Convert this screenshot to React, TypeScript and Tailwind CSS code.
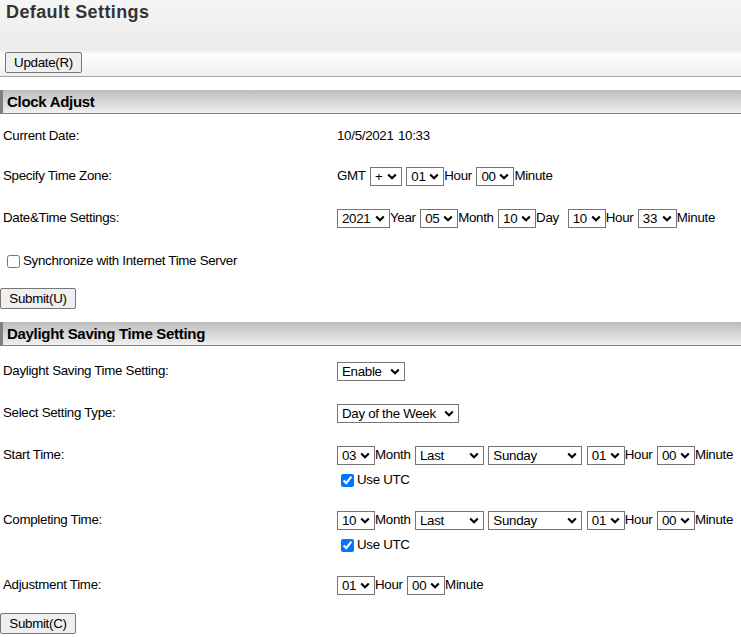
import React from "react";

const font = "font-['Liberation_Sans',Arial,sans-serif]";
const btn =
  "h-[21px] border border-[#767676] bg-[#efefef] rounded-[2px] text-[13.33px] tracking-[-0.3px] text-black text-center";

function Chevron() {
  return (
    <svg
      className="pointer-events-none absolute right-[5px] top-[6px]"
      width="10"
      height="7"
      viewBox="0 0 10 7"
    >
      <path d="M1.2 1.5 L5 5.2 L8.8 1.5" fill="none" stroke="#000" strokeWidth="2.1" />
    </svg>
  );
}

function Sel({ w, value, options }: { w: string; value: string; options?: string[] }) {
  const opts = options ?? [value];
  return (
    <span className={`relative inline-block h-[19px] align-middle ${w}`}>
      <select
        className="block h-[19px] w-full appearance-none rounded-none border border-[#767676] bg-white pl-[4px] text-[13.33px] leading-[17px] tracking-[-0.3px] text-black"
        defaultValue={value}
      >
        {opts.map((o) => (
          <option key={o}>{o}</option>
        ))}
      </select>
      <Chevron />
    </span>
  );
}

function SectionHeader({ title }: { title: string }) {
  return (
    <div className="h-[24px] border-l-[3px] border-b border-[#808080] bg-[linear-gradient(to_bottom,#bcbcbc,#f0f0f0)] pl-[4px] text-[15px] font-bold leading-[23px] text-black">
      {title}
    </div>
  );
}

function Row({ label, mt, children }: { label: string; mt: string; children: React.ReactNode }) {
  return (
    <div className={`grid grid-cols-[334px_1fr] pl-[3px] ${mt}`}>
      <div className="h-[20px] leading-[20px]">{label}</div>
      <div className="whitespace-nowrap leading-[20px] [word-spacing:1px]">{children}</div>
    </div>
  );
}

function UseUtc() {
  return (
    <div className="mt-[5px] flex h-[20px] items-center [word-spacing:0px]">
      <input type="checkbox" defaultChecked className="ml-[4px] mr-[3px] h-[13px] w-[13px]" />
      <span>Use UTC</span>
    </div>
  );
}

const hours = ["00", "01", "02", "03", "04", "05", "06", "07", "08", "09", "10", "11", "12"];

export default function App() {
  return (
    <div className={`${font} w-[741px] min-h-[637px] bg-white text-[13.33px] tracking-[-0.3px] text-black`}>
      {/* page header */}
      <div className="h-[77px] border-b border-[#a5a5a5] bg-[linear-gradient(to_bottom,#f5f5f5_0px,#ebebeb_50px,#fdfdfd_54px,#f0f0f0_76px)]">
        <h1 className="pl-[6px] pt-[1px] text-[18px] font-bold leading-[22px] tracking-[0.4px] text-[#333]">
          Default Settings
        </h1>
        <div className="mt-[29px] pl-[5px]">
          <button className={`${btn} w-[77px]`}>Update(R)</button>
        </div>
      </div>

      <div className="mt-[13px]">
        <SectionHeader title="Clock Adjust" />
      </div>

      <Row label="Current Date:" mt="mt-[12px]">
        10/5/2021 10:33
      </Row>
      <Row label="Specify Time Zone:" mt="mt-[20px]">
        GMT <Sel w="w-[32px]" value="+" options={["+", "-"]} /> <Sel w="w-[38px]" value="01" options={hours} />Hour{" "}
        <Sel w="w-[38px]" value="00" options={["00", "30", "45"]} />Minute
      </Row>
      <Row label="Date&Time Settings:" mt="mt-[22px]">
        <Sel w="w-[53px]" value="2021" />Year <Sel w="w-[38px]" value="05" />Month{" "}
        <Sel w="w-[38px]" value="10" />Day{"\u00a0 "}
        <Sel w="w-[38px]" value="10" />Hour <Sel w="w-[39px]" value="33" />Minute
      </Row>

      <div className="mt-[23px] flex h-[20px] items-center pl-[3px]">
        <input type="checkbox" className="ml-[4px] mr-[3px] h-[13px] w-[13px]" />
        <span>Synchronize with Internet Time Server</span>
      </div>

      <div className="mt-[17px]">
        <button className={`${btn} w-[76px]`}>Submit(U)</button>
      </div>

      <div className="mt-[13px]">
        <SectionHeader title="Daylight Saving Time Setting" />
      </div>

      <Row label="Daylight Saving Time Setting:" mt="mt-[15px]">
        <Sel w="w-[68px]" value="Enable" options={["Enable", "Disable"]} />
      </Row>
      <Row label="Select Setting Type:" mt="mt-[22px]">
        <Sel w="w-[122px]" value="Day of the Week" options={["Day of the Week", "Date"]} />
      </Row>
      <Row label="Start Time:" mt="mt-[22px]">
        <Sel w="w-[38px]" value="03" />Month <Sel w="w-[69px]" value="Last" />{" "}
        <Sel w="w-[94px]" value="Sunday" /> <Sel w="w-[38px]" value="01" />Hour{" "}
        <Sel w="w-[38px]" value="00" />Minute
        <UseUtc />
      </Row>
      <Row label="Completing Time:" mt="mt-[20px]">
        <Sel w="w-[38px]" value="10" />Month <Sel w="w-[69px]" value="Last" />{" "}
        <Sel w="w-[94px]" value="Sunday" /> <Sel w="w-[38px]" value="01" />Hour{" "}
        <Sel w="w-[38px]" value="00" />Minute
        <UseUtc />
      </Row>
      <Row label="Adjustment Time:" mt="mt-[20px]">
        <Sel w="w-[38px]" value="01" />Hour <Sel w="w-[38px]" value="00" />Minute
      </Row>

      <div className="mt-[18px]">
        <button className={`${btn} w-[76px]`}>Submit(C)</button>
      </div>
    </div>
  );
}
